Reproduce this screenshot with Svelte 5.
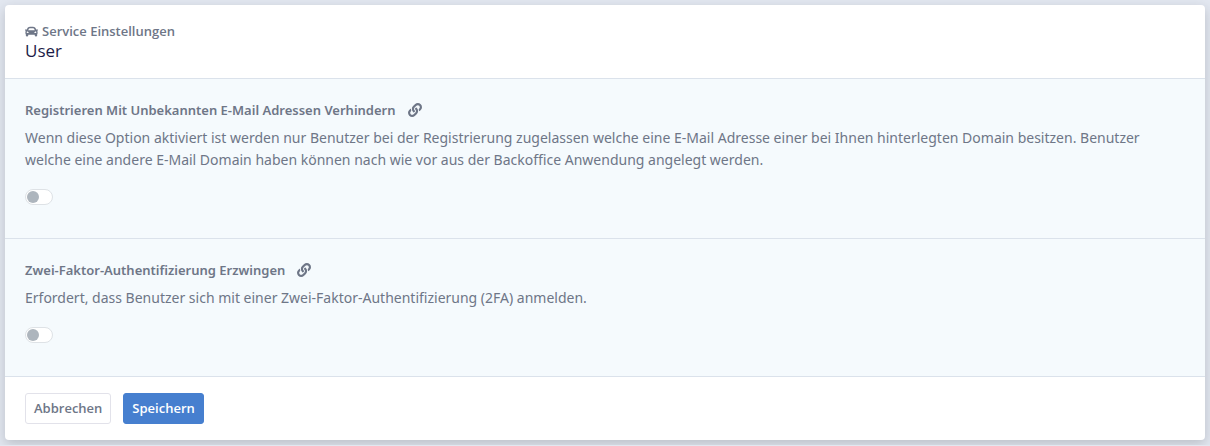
<script>
  const linkPath =
    'M326.612 185.391c59.747 59.809 58.927 155.698.36 214.59-.11.12-.24.25-.36.37l-67.2 67.2c-59.27 59.27-155.699 59.262-214.96 0-59.27-59.26-59.27-155.7 0-214.96l37.106-37.106c9.84-9.84 26.786-3.3 27.294 10.606.648 17.722 3.826 35.527 9.69 52.721 1.986 5.822.567 12.262-3.783 16.612l-13.087 13.087c-28.026 28.026-28.905 73.66-1.155 101.96 28.024 28.579 74.086 28.749 102.325.51l67.2-67.19c28.191-28.191 28.073-73.757 0-101.83-3.701-3.694-7.429-6.564-10.341-8.569a16.037 16.037 0 0 1-6.947-12.606c-.396-10.567 3.348-21.456 11.698-29.806l21.054-21.055c5.521-5.521 14.182-6.199 20.584-1.731a152.482 152.482 0 0 1 20.522 17.197zM467.547 44.449c-59.261-59.262-155.69-59.27-214.96 0l-67.2 67.2c-.12.12-.25.25-.36.37-58.566 58.892-59.387 154.781.36 214.59a152.454 152.454 0 0 0 20.521 17.196c6.402 4.468 15.064 3.789 20.584-1.731l21.054-21.055c8.35-8.35 12.094-19.239 11.698-29.806a16.037 16.037 0 0 0-6.947-12.606c-2.912-2.005-6.64-4.875-10.341-8.569-28.073-28.073-28.191-73.639 0-101.83l67.2-67.19c28.239-28.239 74.3-28.069 102.325.51 27.75 28.3 26.872 73.934-1.155 101.96l-13.087 13.087c-4.35 4.35-5.769 10.79-3.783 16.612 5.864 17.194 9.042 34.999 9.69 52.721.509 13.906 17.454 20.446 27.294 10.606l37.106-37.106c59.271-59.259 59.271-155.699.001-214.959z';
  const carPath =
    'M499.99 176h-59.87l-16.64-41.6C406.38 91.63 365.57 64 319.5 64h-127c-46.06 0-86.88 27.63-103.99 70.4L71.87 176H12.01C4.2 176-1.53 183.34.37 190.91l6 24C7.7 220.25 12.5 224 18.01 224h20.07C24.65 235.73 16 252.78 16 272v48c0 16.12 6.16 30.67 16 41.93V416c0 17.67 14.33 32 32 32h32c17.67 0 32-14.33 32-32v-32h256v32c0 17.67 14.33 32 32 32h32c17.67 0 32-14.33 32-32v-54.07c9.84-11.25 16-25.8 16-41.93v-48c0-19.22-8.65-36.27-22.07-48H494c5.51 0 10.31-3.75 11.64-9.09l6-24c1.89-7.57-3.84-14.91-11.65-14.91zm-352.06-17.83c7.29-18.22 24.94-30.17 44.57-30.17h127c19.63 0 37.28 11.95 44.57 30.17L384 208H128l19.93-49.83zM96 319.8c-19.2 0-32-12.76-32-31.9S76.8 256 96 256s48 28.71 48 47.85-28.8 15.95-48 15.95zm320 0c-19.2 0-48 3.19-48-15.95S396.8 256 416 256s32 12.76 32 31.9-12.8 31.9-32 31.9z';

  let settings = $state([
    {
      id: 'unknown-mail',
      title: 'Registrieren Mit Unbekannten E-Mail Adressen Verhindern',
      text: 'Wenn diese Option aktiviert ist werden nur Benutzer bei der Registrierung zugelassen welche eine E-Mail Adresse einer bei Ihnen hinterlegten Domain besitzen. Benutzer welche eine andere E-Mail Domain haben können nach wie vor aus der Backoffice Anwendung angelegt werden.',
      on: false
    },
    {
      id: 'two-factor',
      title: 'Zwei-Faktor-Authentifizierung Erzwingen',
      text: 'Erfordert, dass Benutzer sich mit einer Zwei-Faktor-Authentifizierung (2FA) anmelden.',
      on: false
    }
  ]);

  function reset() {
    for (const s of settings) s.on = false;
  }
</script>

<form class="card" onsubmit={(e) => e.preventDefault()}>
  <header>
    <p class="crumb">
      <svg class="car" viewBox="0 0 512 512" aria-hidden="true"><path d={carPath} /></svg>
      Service Einstellungen
    </p>
    <h1>User</h1>
  </header>

  {#each settings as s (s.id)}
    <section id={s.id}>
      <div class="heading">
        <label for="{s.id}-switch">{s.title}</label>
        <a href="#{s.id}" aria-labelledby="{s.id}-switch">
          <svg viewBox="0 0 512 512" aria-hidden="true"><path d={linkPath} /></svg>
        </a>
      </div>
      <p class="text">{s.text}</p>
      <input id="{s.id}-switch" type="checkbox" role="switch" bind:checked={s.on} />
    </section>
  {/each}

  <footer>
    <button type="button" onclick={reset}>Abbrechen</button>
    <button type="submit" class="primary">Speichern</button>
  </footer>
</form>

<style>
  :global(body) {
    background: #e2e7f0;
  }

  .card {
    margin: 5px;
    border-radius: 4px;
    overflow: hidden;
    background: #fff;
    box-shadow: 0 4px 12px rgba(33, 37, 41, 0.2);
    color: #6e7687;
    font-family: 'Segoe UI', 'Noto Sans', 'Open Sans', sans-serif;
    font-size: 14px;
    line-height: 22px;
  }

  header {
    padding: 16px 20px 17px;
  }

  .crumb {
    display: flex;
    align-items: center;
    gap: 4px;
    margin: 0;
    font-family: 'Segoe UI', 'Open Sans', 'Noto Sans', sans-serif;
    font-size: 13px;
    font-weight: 600;
    line-height: 20px;
  }

  svg {
    display: block;
    width: 14px;
    height: 14px;
    fill: currentColor;
  }

  .car {
    width: 13px;
    height: 13px;
  }

  h1 {
    margin: 0;
    color: #1c1c48;
    font-family: 'Segoe UI', 'Open Sans', 'Noto Sans', sans-serif;
    font-size: 17px;
    font-weight: 400;
    line-height: 20px;
  }

  section {
    padding: 20px 20px 33px;
    border-top: 1px solid #dbe2eb;
    background: #f5fafd;
  }

  .heading {
    display: flex;
    align-items: center;
    gap: 12px;
    font-size: 13px;
    font-weight: 600;
  }

  a {
    color: #6e7687;
  }

  .text {
    margin: 6px 0 18px;
  }

  input {
    display: block;
    box-sizing: border-box;
    width: 28px;
    height: 16px;
    margin: 0;
    padding: 1px;
    appearance: none;
    border: 1px solid #dee2e6;
    border-radius: 8px;
    background: #fff;
  }

  input::before {
    content: '';
    display: block;
    width: 12px;
    height: 12px;
    border-radius: 50%;
    background: #adb5bd;
  }

  input:checked {
    background: #467fcf;
  }

  input:checked::before {
    margin-left: auto;
    background: #fff;
  }

  footer {
    display: flex;
    gap: 12px;
    padding: 16px 20px;
    border-top: 1px solid #dbe2eb;
  }

  button {
    padding: 4px 8px;
    border: 1px solid #e2e2ea;
    border-radius: 3px;
    background: #fff;
    color: #6e7687;
    font: 600 13px/21px 'Segoe UI', 'Open Sans', 'Noto Sans', sans-serif;
  }

  .primary {
    border-color: #467fcf;
    background: #467fcf;
    color: #fff;
  }
</style>
